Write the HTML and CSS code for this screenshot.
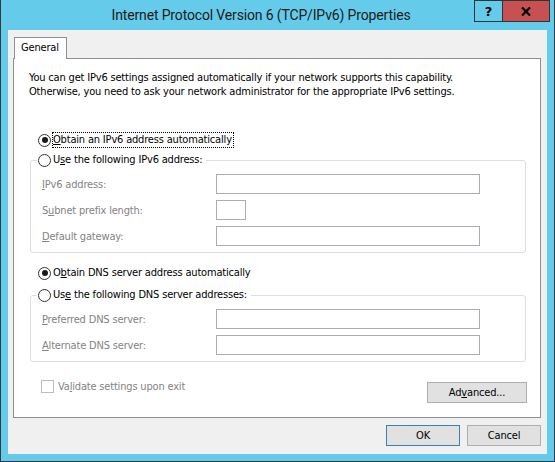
FILE: index.html
```html
<!DOCTYPE html>
<html lang="en">
<head>
  <meta charset="UTF-8" />
  <title>Internet Protocol Version 6 (TCP/IPv6) Properties</title>
  <link rel="stylesheet" href="styles.css">
</head>
<body>
  <div class="window">
    <div class="titlebar">
      <div class="title">Internet Protocol Version 6 (TCP/IPv6) Properties</div>
      <div class="caption-btns">
        <span class="cap-btn help">?</span>
        <span class="cap-btn close">
          <svg width="10" height="9" viewBox="0 0 10 9"><path d="M1 0.5 L9 8.5 M9 0.5 L1 8.5" stroke="#000" stroke-width="2.2" fill="none"/></svg>
        </span>
      </div>
    </div>

    <div class="client">
      <div class="tabs"><span class="tab">General</span></div>

      <div class="panel">
        <p class="intro">You can get IPv6 settings assigned automatically if your network supports this capability.<br>Otherwise, you need to ask your network administrator for the appropriate IPv6 settings.</p>

        <!-- Adresse IPv6 -->
        <div class="option first"><span class="radio checked"></span><span class="text focus"><u>O</u>btain an IPv6 address automatically</span></div>
        <div class="group">
          <div class="option legend"><span class="radio"></span><span class="text">U<u>s</u>e the following IPv6 address:</span></div>
          <div class="field first"><span class="label"><u>I</u>Pv6 address:</span><span class="input wide"></span></div>
          <div class="field"><span class="label">S<u>u</u>bnet prefix length:</span><span class="input short"></span></div>
          <div class="field"><span class="label"><u>D</u>efault gateway:</span><span class="input wide"></span></div>
        </div>

        <!-- Serveurs DNS -->
        <div class="option dns"><span class="radio checked"></span><span class="text">O<u>b</u>tain DNS server address automatically</span></div>
        <div class="group dns-group">
          <div class="option legend"><span class="radio"></span><span class="text">Us<u>e</u> the following DNS server addresses:</span></div>
          <div class="field first"><span class="label"><u>P</u>referred DNS server:</span><span class="input wide"></span></div>
          <div class="field"><span class="label"><u>A</u>lternate DNS server:</span><span class="input wide"></span></div>
        </div>

        <div class="bottom">
          <span class="check"><span class="box"></span>Va<u>l</u>idate settings upon exit</span>
          <button class="btn advanced">Ad<u>v</u>anced...</button>
        </div>
      </div>

      <div class="actions">
        <button class="btn default">OK</button>
        <button class="btn">Cancel</button>
      </div>
    </div>
  </div>
</body>
</html>
```

FILE: styles.css
```css
* { box-sizing: border-box; }
body {
  margin: 0; background: #fff;
  font-family: "DejaVu Sans Condensed", "DejaVu Sans", sans-serif;
  font-size: 11px; letter-spacing: -0.18px; color: #000;
}
u { text-decoration: underline; text-underline-offset: 1px; }

.window {
  width: 555px; height: 462px; background: #65cbea;
  border: 1px solid #2f3b40; border-top: none;
  display: flex; flex-direction: column;
}
.titlebar { height: 30px; display: flex; flex-shrink: 0; }
.title {
  flex: 1; padding-left: 47px; text-align: center;
  font-family: Roboto, "Liberation Sans", sans-serif; font-size: 14px; letter-spacing: -0.15px;
  line-height: 31px; color: #1b1b1b;
}
.caption-btns { display: flex; align-items: flex-start; padding-right: 4px; }
.cap-btn {
  height: 22px; border: 1px solid #2b3438;
  display: flex; align-items: center; justify-content: center;
}
.help { width: 29px; font: bold 13px "DejaVu Sans", sans-serif; }
.close { width: 47px; border-left: none; background: #c75050; }

.client {
  flex: 1; margin: 0 7px 7px; background: #f0f0f0;
  padding: 7px 6px 0 5px;
}
.tabs { display: flex; padding-left: 1px; }
.tab {
  width: 53px; height: 22px; margin-bottom: -1px; position: relative;
  background: #fff; border: 1px solid #8c8e94; border-bottom: none;
  padding-left: 6px; line-height: 20px;
}
.panel {
  height: 360px; background: #fff; border: 1px solid #8c8e94;
}
.intro { margin: 12px 0 0 15px; line-height: 14px; }

.option { display: flex; align-items: center; height: 16px; }
.option.first { margin: 33px 0 0 24px; }
.option.dns { margin: 12px 0 0 24px; }
.radio {
  width: 13px; height: 13px; border: 1px solid #333; border-radius: 50%;
  background: #fff; margin-right: 1px; position: relative; flex-shrink: 0;
}
.radio.checked::after {
  content: ""; position: absolute; left: 2.5px; top: 2.5px;
  width: 6px; height: 6px; border-radius: 50%; background: #1a1a1a;
}
.text { border: 1px solid transparent; line-height: 14px; padding-right: 1px; white-space: nowrap; }
.text.focus { border: 1px dotted #000; }

.group {
  margin: 12px 14px 0 16px; padding-bottom: 6px;
  border: 1px solid #dadfe4; border-radius: 3px;
}
.dns-group { margin-top: 14px; }
.option.legend {
  width: fit-content; background: #fff; margin: -9px 0 0 6px;
  padding: 0 2px 0 1px;
}
.field { display: flex; align-items: center; height: 20px; margin-top: 6px; padding-left: 11px; }
.field.first { margin-top: 6px; }
.label { width: 174px; color: #838383; }
.input { height: 20px; border: 1px solid #abadb3; background: #fff; }
.input.wide { width: 264px; }
.input.short { width: 30px; }

.bottom {
  display: flex; justify-content: space-between; align-items: flex-start;
  margin: 18px 13px 0 27px;
}
.check { display: flex; align-items: center; height: 13px; color: #838383; }
.box { width: 13px; height: 13px; border: 1px solid #bcbcbc; background: #fff; margin-right: 4px; }

.btn {
  height: 21px; background: #e1e1e1; border: 1px solid #adadad; border-radius: 0;
  font-family: inherit; font-size: 11px; letter-spacing: inherit; color: #000; padding: 0;
}
.advanced { width: 100px; margin-top: 2px; }
.actions { display: flex; justify-content: flex-end; gap: 7px; margin-top: 7px; }
.actions .btn { width: 74px; }
.btn.default { border-color: #3c7fb1; }
```
